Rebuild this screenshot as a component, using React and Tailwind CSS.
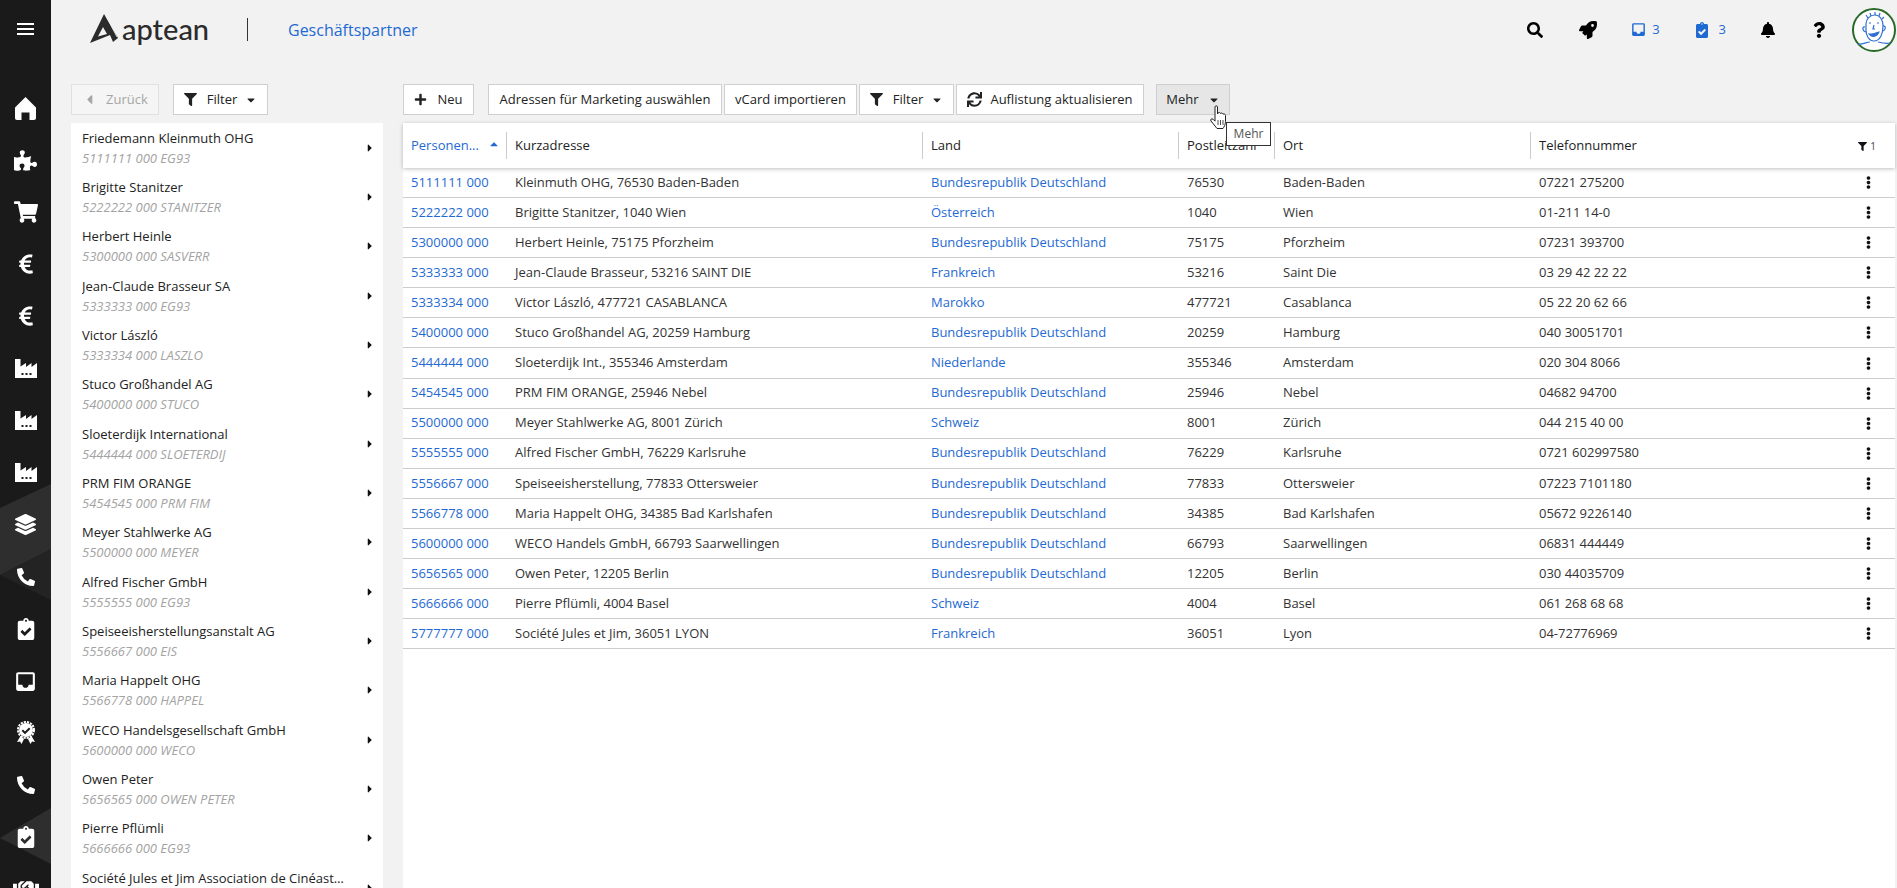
import {
  FaPuzzlePiece, FaShoppingCart, FaEuroSign, FaLayerGroup, FaPhoneAlt, FaClipboardCheck,
  FaHandshake, FaSearch, FaRocket, FaBell, FaQuestion, FaFilter, FaPlus, FaSync, FaEllipsisV, FaCaretDown,
  FaCaretRight, FaCaretLeft, FaCaretUp,
} from 'react-icons/fa';
import { MdInbox } from 'react-icons/md';

const partners = [
  ['Friedemann Kleinmuth OHG', '5111111 000 EG93'],
  ['Brigitte Stanitzer', '5222222 000 STANITZER'],
  ['Herbert Heinle', '5300000 000 SASVERR'],
  ['Jean-Claude Brasseur SA', '5333333 000 EG93'],
  ['Victor László', '5333334 000 LASZLO'],
  ['Stuco Großhandel AG', '5400000 000 STUCO'],
  ['Sloeterdijk International', '5444444 000 SLOETERDIJ'],
  ['PRM FIM ORANGE', '5454545 000 PRM FIM'],
  ['Meyer Stahlwerke AG', '5500000 000 MEYER'],
  ['Alfred Fischer GmbH', '5555555 000 EG93'],
  ['Speiseeisherstellungsanstalt AG', '5556667 000 EIS'],
  ['Maria Happelt OHG', '5566778 000 HAPPEL'],
  ['WECO Handelsgesellschaft GmbH', '5600000 000 WECO'],
  ['Owen Peter', '5656565 000 OWEN PETER'],
  ['Pierre Pflümli', '5666666 000 EG93'],
  ['Société Jules et Jim Association de Cinéastes', '5777777 000 LYON'],
];

const rows = [
  ['5111111 000', 'Kleinmuth OHG, 76530 Baden-Baden', 'Bundesrepublik Deutschland', '76530', 'Baden-Baden', '07221 275200'],
  ['5222222 000', 'Brigitte Stanitzer, 1040 Wien', 'Österreich', '1040', 'Wien', '01-211 14-0'],
  ['5300000 000', 'Herbert Heinle, 75175 Pforzheim', 'Bundesrepublik Deutschland', '75175', 'Pforzheim', '07231 393700'],
  ['5333333 000', 'Jean-Claude Brasseur, 53216 SAINT DIE', 'Frankreich', '53216', 'Saint Die', '03 29 42 22 22'],
  ['5333334 000', 'Victor László, 477721 CASABLANCA', 'Marokko', '477721', 'Casablanca', '05 22 20 62 66'],
  ['5400000 000', 'Stuco Großhandel AG, 20259 Hamburg', 'Bundesrepublik Deutschland', '20259', 'Hamburg', '040 30051701'],
  ['5444444 000', 'Sloeterdijk Int., 355346 Amsterdam', 'Niederlande', '355346', 'Amsterdam', '020 304 8066'],
  ['5454545 000', 'PRM FIM ORANGE, 25946 Nebel', 'Bundesrepublik Deutschland', '25946', 'Nebel', '04682 94700'],
  ['5500000 000', 'Meyer Stahlwerke AG, 8001 Zürich', 'Schweiz', '8001', 'Zürich', '044 215 40 00'],
  ['5555555 000', 'Alfred Fischer GmbH, 76229 Karlsruhe', 'Bundesrepublik Deutschland', '76229', 'Karlsruhe', '0721 602997580'],
  ['5556667 000', 'Speiseeisherstellung, 77833 Ottersweier', 'Bundesrepublik Deutschland', '77833', 'Ottersweier', '07223 7101180'],
  ['5566778 000', 'Maria Happelt OHG, 34385 Bad Karlshafen', 'Bundesrepublik Deutschland', '34385', 'Bad Karlshafen', '05672 9226140'],
  ['5600000 000', 'WECO Handels GmbH, 66793 Saarwellingen', 'Bundesrepublik Deutschland', '66793', 'Saarwellingen', '06831 444449'],
  ['5656565 000', 'Owen Peter, 12205 Berlin', 'Bundesrepublik Deutschland', '12205', 'Berlin', '030 44035709'],
  ['5666666 000', 'Pierre Pflümli, 4004 Basel', 'Schweiz', '4004', 'Basel', '061 268 68 68'],
  ['5777777 000', 'Société Jules et Jim, 36051 LYON', 'Frankreich', '36051', 'Lyon', '04-72776969'],
];

function HomeIcon() {
  return (
    <svg viewBox="0 0 21 23" className="w-[21px] h-[23px]" fill="#fff">
      <path d="M10.500 0L21 10.500V21c0 1.200-.8 2-2 2h-4.500v-7.500h-8V23H2c-1.200 0-2-.8-2-2V10.500z" />
    </svg>
  );
}

function FactoryIcon() {
  return (
    <svg viewBox="0 0 22 19" className="w-[22px] h-[19px]">
      <path d="M0 19V0h5.500v7.500L11 4v4l5.500-4v4L22 4v15z" fill="#fff" />
      <path d="M6.500 14h2v2h-2zM10.500 14h2v2h-2zM14.500 14h2v2h-2z" fill="#1a1a1a" />
    </svg>
  );
}

function AwardIcon() {
  return (
    <svg viewBox="0 0 20 24" className="w-[20px] h-[24px]">
      <path d="M4.500 15l-3.500 6 3-.5 1.500 2.500 2.500-5zM15.500 15l3.500 6-3-.5-1.500 2.500-2.500-5z" fill="#fff" />
      <circle cx="10" cy="9" r="7" fill="#fff" />
      <circle cx="10" cy="9" r="8" fill="none" stroke="#fff" strokeWidth="2" strokeDasharray="2.200 1" />
      <path d="M6.300 9.200l2.700 2.700 4.700-4.700" fill="none" stroke="#1a1a1a" strokeWidth="2" />
    </svg>
  );
}

const navIcons = [
  <HomeIcon />,
  <FaPuzzlePiece size={23} />,
  <FaShoppingCart size={24} />,
  <FaEuroSign size={22} />,
  <FaEuroSign size={22} />,
  <FactoryIcon />,
  <FactoryIcon />,
  <FactoryIcon />,
  <FaLayerGroup size={21} />,
  <FaPhoneAlt size={18} />,
  <FaClipboardCheck size={22} />,
  <MdInbox size={25} />,
  <AwardIcon />,
  <FaPhoneAlt size={18} />,
  <FaClipboardCheck size={22} />,
  <FaHandshake size={26} />,
];

function Sidebar() {
  return (
    <div className="relative w-[51px] h-[888px] shrink-0 bg-[#1a1a1a] text-white overflow-hidden">
      <svg className="absolute inset-0" width="51" height="888">
        <polygon points="0,575 51,549 51,600" fill="#232323" />
        <polygon points="0,508 51,484 51,549 0,575" fill="#2e2e2e" />
        <polygon points="0,838 51,808 51,864" fill="#2e2e2e" />
      </svg>
      <div className="relative h-[82px] pb-[24px] flex flex-col items-center justify-center gap-[3px]">
        <div className="w-[17px] h-[2px] bg-white"></div>
        <div className="w-[17px] h-[2px] bg-white"></div>
        <div className="w-[17px] h-[2px] bg-white"></div>
      </div>
      {navIcons.map((icon, i) => (
        <div key={i} className="relative h-[52.1px] flex items-center justify-center">
          {icon}
        </div>
      ))}
    </div>
  );
}

function Logo() {
  return (
    <div className="flex items-center w-[118px] h-[36px]">
      <svg viewBox="0 0 28 29" className="w-[28px] h-[29px] shrink-0 -mt-[3px]">
        <path d="M14 0L0 29l20-8 3 7 5-4z" fill="#2b2b2b" />
        <path d="M16 2l11 21" stroke="#f2f2f2" strokeWidth="0.8" />
        <path d="M13 13l4 7-9 2.500z" fill="#f2f2f2" />
      </svg>
      <span className="ml-[4px] font-['Lato',sans-serif] text-[29px] leading-[36px] font-medium text-[#2b2b2b] -mt-[2px]">aptean</span>
    </div>
  );
}

function Avatar() {
  return (
    <div className="w-[44px] h-[44px] rounded-full border-2 border-[#2a6b2a] bg-white shrink-0">
      <svg viewBox="0 0 40 40" className="w-full h-full" fill="none" stroke="#2f6fd0" strokeWidth="1.2">
        <path d="M12 14c0-5 4-9 9-9s8 5 8 11c0 8-3 15-9 15-5 0-8-5-8-11z" />
        <path d="M12 5l2 3M16 3l1 3M21 2v3M26 3l-1 3M30 7l-2 2" />
        <path d="M11 17c-3-1-3 4 1 5M29 16c3-1 3 4 0 5" />
        <path d="M15 24c2 3 7 4 10-2-2 0-5 3-10 2z" fill="#2f6fd0" />
        <path d="M20 15l-1 4h2M15 13h2M23 13h2" />
        <path d="M4 34c4 1 8-2 12-2M24 32c4 1 8 2 12 1" />
      </svg>
    </div>
  );
}

function TopBar() {
  return (
    <div className="h-[59px] flex items-center">
      <div className="ml-[39px]">
        <Logo />
      </div>
      <div className="ml-[39px] w-px h-[23px] bg-[#333]"></div>
      <div className="ml-[40px] text-[16px] text-[#1f6ad2]">Geschäftspartner</div>
      <div className="ml-auto flex items-center text-black">
        <FaSearch size={16} />
        <FaRocket size={18} className="ml-[36px]" />
        <div className="ml-[33px] flex items-center gap-[5px] text-[#1f6ad2]">
          <MdInbox size={17} />
          <span className="text-[13px]">3</span>
        </div>
        <div className="ml-[34px] flex items-center gap-[9px] text-[#1f6ad2]">
          <FaClipboardCheck size={16} />
          <span className="text-[13px]">3</span>
        </div>
        <FaBell size={16} className="ml-[34px]" />
        <FaQuestion size={16} className="ml-[35px]" />
        <div className="ml-[25px] mr-[1px]">
          <Avatar />
        </div>
      </div>
    </div>
  );
}

function Btn({ children, className = 'bg-white border-[#cfcfcf] text-[#222]' }) {
  return (
    <div className={`h-[31px] flex items-center justify-center border text-[13px] whitespace-nowrap ${className}`}>
      {children}
    </div>
  );
}

function PartnerList() {
  return (
    <div className="w-[312px] shrink-0 bg-white mt-[8px] overflow-hidden">
      {partners.map(([name, sub], i) => (
        <div key={i} className="h-[49.33px] flex items-center pl-[11px] pr-[8px]">
          <div className="flex-1 min-w-0">
            <div className="text-[13px] leading-[20px] text-[#222] truncate w-[263px]">{name}</div>
            <div className="text-[13px] leading-[20px] italic text-[#a3a3a3] truncate">{sub}</div>
          </div>
          <FaCaretRight size={12} className="text-[#111] -mr-[1px]" />
        </div>
      ))}
    </div>
  );
}

const colWidths = ['w-[104px]', 'w-[416px]', 'w-[256px]', 'w-[96px]', 'w-[256px]'];

function TableHeader() {
  const titles = ['Personen...', 'Kurzadresse', 'Land', 'Postleitzahl', 'Ort'];
  return (
    <div className="relative z-10 h-[45px] flex items-center bg-white shadow-[0_1px_4px_rgba(0,0,0,0.25)] text-[13px] text-[#222]">
      {titles.map((title, i) => (
        <div key={title} className={`${colWidths[i]} h-[27px] flex items-center pl-[8px] border-r border-[#cccccc] ${i === 0 ? 'text-[#1f6ad2]' : ''}`}>
          <span>{title}</span>
          {i === 0 && <FaCaretUp size={12} className="ml-[9px] -mt-[3px]" />}
        </div>
      ))}
      <div className="flex-1 pl-[8px]">Telefonnummer</div>
      <div className="flex items-center mr-[19px] mt-[1px]">
        <FaFilter size={9} className="text-[#111]" />
        <span className="ml-[3px] text-[10px] text-[#444]">1</span>
      </div>
    </div>
  );
}

function TableRow({ row }) {
  return (
    <div className="h-[30.08px] flex items-center border-b border-[#cccccc] text-[13px] text-[#333]">
      <div className={`${colWidths[0]} pl-[8px] text-[#1f6ad2]`}>{row[0]}</div>
      <div className={`${colWidths[1]} pl-[8px]`}>{row[1]}</div>
      <div className={`${colWidths[2]} pl-[8px] text-[#1f6ad2]`}>{row[2]}</div>
      <div className={`${colWidths[3]} pl-[8px]`}>{row[3]}</div>
      <div className={`${colWidths[4]} pl-[8px]`}>{row[4]}</div>
      <div className="flex-1 pl-[8px]">{row[5]}</div>
      <FaEllipsisV size={13} className="text-[#111] mr-[20px]" />
    </div>
  );
}

function HandCursor() {
  return (
    <svg viewBox="0 0 20 25" className="absolute left-[53px] top-[21px] w-[20px] h-[25px]">
      <path
        d="M6 2c0-1.500 2.500-1.500 2.500 0v7l.5-1c1-1 2.400-.5 2.500.5 .8-.8 2.300-.5 2.500.7 1-.6 2.500 0 2.500 1.300v6c0 3-1.500 5.500-2.500 7H8l-6-7.500c-1-1.500.5-2.800 2-1.800l2 2z"
        fill="#fff"
        stroke="#222"
        strokeWidth="1"
        strokeLinejoin="round"
      />
      <path d="M9 15v5M11.500 15v5M14 15v5" stroke="#222" strokeWidth="0.8" />
    </svg>
  );
}

export default function App() {
  return (
    <div className="flex w-[1897px] h-[888px] overflow-hidden bg-[#f2f2f2] font-['Open_Sans',sans-serif]">
      <Sidebar />
      <div className="flex-1 min-w-0 flex flex-col">
        <TopBar />
        <div className="flex-1 min-h-0 flex pl-[20px] pt-[25px]">
          <div className="w-[312px] shrink-0 flex flex-col">
            <div className="flex gap-[14px]">
              <Btn className="w-[88px] bg-[#f5f5f5] border-[#e0e0e0] text-[#a6a6a6]">
                <FaCaretLeft size={15} className="mr-[9px]" />
                Zurück
              </Btn>
              <Btn className="w-[95px] bg-white border-[#cfcfcf] text-[#222]">
                <FaFilter size={13} className="mr-[10px]" />
                Filter
                <FaCaretDown size={12} className="ml-[8px]" />
              </Btn>
            </div>
            <PartnerList />
          </div>
          <div className="ml-[20px] flex-1 min-w-0 mr-[2px] flex flex-col">
            <div className="relative z-20 flex">
              <Btn className="w-[71px] bg-white border-[#cfcfcf] text-[#222]">
                <FaPlus size={13} className="mr-[10px]" />
                Neu
              </Btn>
              <div className="ml-[14px]">
                <Btn className="w-[234px] bg-white border-[#cfcfcf] text-[#222]">Adressen für Marketing auswählen</Btn>
              </div>
              <div className="ml-[2px]">
                <Btn className="w-[133px] bg-white border-[#cfcfcf] text-[#222]">vCard importieren</Btn>
              </div>
              <div className="ml-[2px]">
                <Btn className="w-[95px] bg-white border-[#cfcfcf] text-[#222]">
                  <FaFilter size={13} className="mr-[10px]" />
                  Filter
                  <FaCaretDown size={12} className="ml-[8px]" />
                </Btn>
              </div>
              <div className="ml-[2px]">
                <Btn className="w-[188px] bg-white border-[#cfcfcf] text-[#222]">
                  <FaSync size={15} className="mr-[8px]" />
                  Auflistung aktualisieren
                </Btn>
              </div>
              <div className="relative ml-[12px]">
                <Btn className="w-[74px] bg-[#e6e6e6] border-[#cfcfcf] text-[#222]">
                  Mehr
                  <FaCaretDown size={12} className="ml-[9px]" />
                </Btn>
                <HandCursor />
                <div className="absolute left-[70px] top-[38px] w-[45px] h-[24px] flex items-center justify-center border border-[#333] bg-white text-[12px] text-[#555]">
                  Mehr
                </div>
              </div>
            </div>
            <div className="flex-1 bg-white mt-[8px]">
              <TableHeader />
              {rows.map((row) => (
                <TableRow key={row[0]} row={row} />
              ))}
            </div>
          </div>
        </div>
      </div>
    </div>
  );
}
